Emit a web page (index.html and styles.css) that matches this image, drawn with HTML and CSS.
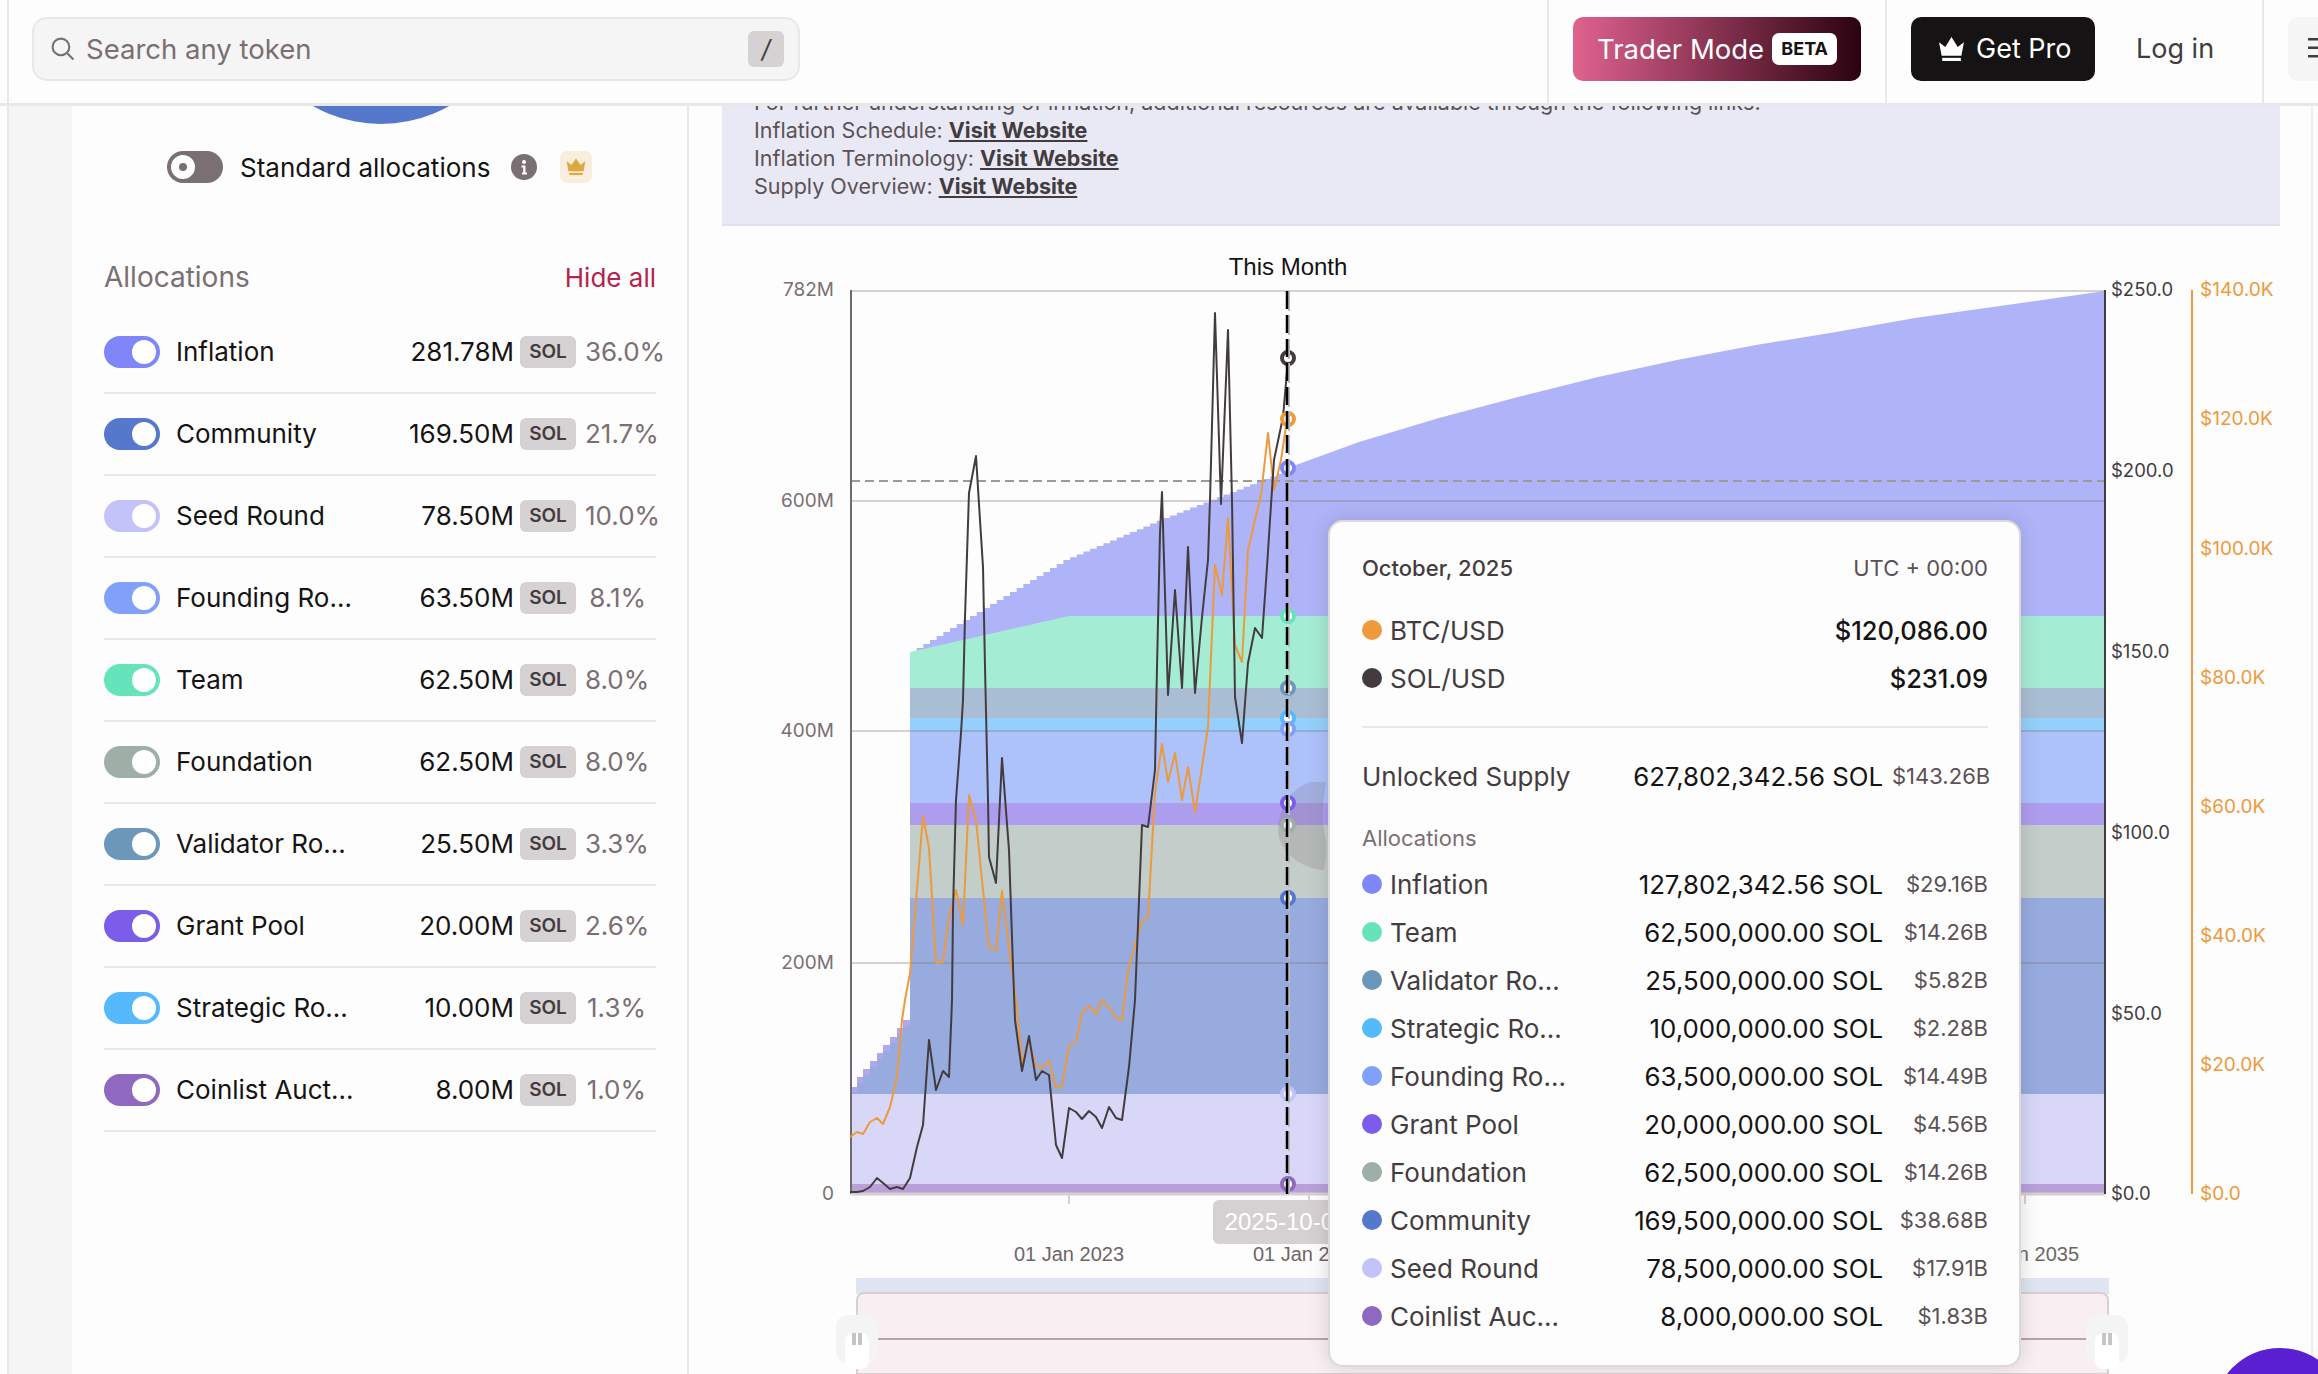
FILE: index.html
```html
<!DOCTYPE html>
<html>
<head>
<title>Solana token unlocks</title>
<link rel="stylesheet" href="styles.css">
</head>
<body>
<div class="app">

<header class="topbar">
	<div class="nav-part nav-search">
		<div class="search">
			<svg class="search-icon" viewBox="0 0 24 24"><circle cx="10.5" cy="10.5" r="8"/><line x1="16.5" y1="16.5" x2="22.5" y2="22.5"/></svg>
			<span class="search-text">Search any token</span>
			<span class="key">/</span>
		</div>
	</div>
	<div class="nav-part nav-trader">
		<a class="btn trader">Trader Mode <span class="beta">BETA</span></a>
	</div>
	<div class="nav-part nav-user">
		<a class="btn pro">
			<svg class="crown" viewBox="0 0 26 26"><path d="M1 7l6 4.500L13 2l6 9.500L25 7l-2.500 13h-19z"/><rect x="4" y="22" width="18" height="3"/></svg>
			Get Pro
		</a>
		<a class="login">Log in</a>
	</div>
	<div class="nav-part nav-menu">
		<div class="menu-btn">
			<svg viewBox="0 0 24 20"><rect y="0" width="24" height="2.500"/><rect y="8.500" width="24" height="2.500"/><rect y="17" width="24" height="2.500"/></svg>
		</div>
	</div>
</header>

<div class="content">
	<div class="gutter"></div>

	<aside class="sidebar">
		<div class="pie-clip"><div class="pie"></div></div>

		<div class="standard">
			<span class="switch-off"></span>
			<span class="standard-label">Standard allocations</span>
			<svg class="info-icon" viewBox="0 0 26 26"><circle cx="13" cy="13" r="13"/><circle cx="13" cy="8" r="2" fill="#fff"/><path d="M10.500 11.500h4v7h1.500v2h-5v-2h1.200v-5h-1.700z" fill="#fff"/></svg>
			<span class="crown-badge">
				<svg viewBox="0 0 26 26"><path d="M2 6l5.500 4.500L13 3l5.500 7.500L24 6l-2 12H4z"/><rect x="5" y="20" width="16" height="2.500"/></svg>
			</span>
		</div>

		<div class="alloc-head">
			<span class="alloc-title">Allocations</span>
			<a class="hide-all">Hide all</a>
		</div>

		<ul class="alloc-list">
			<li class="alloc-row c-inflation"><span class="toggle"></span><span class="alloc-name">Inflation</span><span class="alloc-amt">281.78M</span><span class="unit">SOL</span><span class="alloc-pct">36.0%</span></li>
			<li class="alloc-row c-community"><span class="toggle"></span><span class="alloc-name">Community</span><span class="alloc-amt">169.50M</span><span class="unit">SOL</span><span class="alloc-pct">21.7%</span></li>
			<li class="alloc-row c-seed"><span class="toggle"></span><span class="alloc-name">Seed Round</span><span class="alloc-amt">78.50M</span><span class="unit">SOL</span><span class="alloc-pct">10.0%</span></li>
			<li class="alloc-row c-founding"><span class="toggle"></span><span class="alloc-name">Founding Ro...</span><span class="alloc-amt">63.50M</span><span class="unit">SOL</span><span class="alloc-pct">8.1%</span></li>
			<li class="alloc-row c-team"><span class="toggle"></span><span class="alloc-name">Team</span><span class="alloc-amt">62.50M</span><span class="unit">SOL</span><span class="alloc-pct">8.0%</span></li>
			<li class="alloc-row c-foundation"><span class="toggle"></span><span class="alloc-name">Foundation</span><span class="alloc-amt">62.50M</span><span class="unit">SOL</span><span class="alloc-pct">8.0%</span></li>
			<li class="alloc-row c-validator"><span class="toggle"></span><span class="alloc-name">Validator Ro...</span><span class="alloc-amt">25.50M</span><span class="unit">SOL</span><span class="alloc-pct">3.3%</span></li>
			<li class="alloc-row c-grant"><span class="toggle"></span><span class="alloc-name">Grant Pool</span><span class="alloc-amt">20.00M</span><span class="unit">SOL</span><span class="alloc-pct">2.6%</span></li>
			<li class="alloc-row c-strategic"><span class="toggle"></span><span class="alloc-name">Strategic Ro...</span><span class="alloc-amt">10.00M</span><span class="unit">SOL</span><span class="alloc-pct">1.3%</span></li>
			<li class="alloc-row c-coinlist"><span class="toggle"></span><span class="alloc-name">Coinlist Auct...</span><span class="alloc-amt">8.00M</span><span class="unit">SOL</span><span class="alloc-pct">1.0%</span></li>
		</ul>
	</aside>

	<main class="main">
		<section class="notes">
			<p>For further understanding of inflation, additional resources are available through the following links.</p>
			<p>Inflation Schedule: <a>Visit Website</a></p>
			<p>Inflation Terminology: <a>Visit Website</a></p>
			<p>Supply Overview: <a>Visit Website</a></p>
		</section>

		<div class="chart">
			<svg class="chart-svg" viewBox="722 230 1596 1144">
				<text class="month-label" x="1288" y="275">This Month</text>

				<!-- minimap -->
				<rect x="856" y="1278" width="1253" height="16" fill="#dfe5f2"/>
				<path d="M857 1374V1300a7 7 0 0 1 7-7H2101a7 7 0 0 1 7 7V1374z" fill="#f9eff2" stroke="#d5d0d2" stroke-width="2"/>
				<line x1="857" y1="1339" x2="2107" y2="1339" stroke="#b8a3aa" stroke-width="2"/>

				<!-- stacked areas -->
				<path fill="#aeb4f7" d="M910 652h6.670v-4h6.670v-4h6.670v-4h6.670v-4h6.670v-4h6.670v-4h6.670v-4h6.670v-4h6.670v-4h6.670v-4h6.670v-4h6.670v-4h6.670v-4h6.670v-4h6.670v-4h6.670v-4h6.670v-4h6.670v-4h6.670v-4h6.670v-4h6.670v-4h6.670v-4h6.670v-4h6.670v-2.800h6.670v-2.800h6.670v-2.800h6.670v-2.800h6.670v-2.800h6.670v-2.800h6.670v-2.800h6.670v-2.800h6.670v-2.800h6.670v-2.800h6.670v-2.800h6.670v-2.800h6.670v-2.800h6.670v-2.800h6.670v-2.800h6.670v-2.600h6.670v-2.600h6.670v-2.600h6.670v-2.600h6.670v-2.600h6.670v-2.600h6.670v-2.600h6.670v-2.600h6.670v-2.600h6.670v-2.600h6.670v-2.600h6.670v-2.600h6.670v-2.600h6.670v-2.600h6.670v-2.600h6.670v-2.600h6.670v-2.600h6.670v-2.600h6.670v-2.600L1296 465L1359 442L1439 418L1518 397L1598 377L1677 360L1756 345L1836 332L1915 318L2021 303L2105 291V700H910z"/>
				<path fill="#a5ecd4" d="M910 652L1069 616H2105V690H910z"/>
				<rect fill="#a9bed4" x="910" y="688" width="1195" height="31"/>
				<rect fill="#94d0fb" x="910" y="718" width="1195" height="14"/>
				<rect fill="#adc1fb" x="910" y="731" width="1195" height="73"/>
				<rect fill="#ad9dee" x="910" y="803" width="1195" height="23"/>
				<rect fill="#c3cdc9" x="910" y="825" width="1195" height="74"/>
				<rect fill="#97abdf" x="910" y="898" width="1195" height="197"/>
				<path fill="#b3a5ef" d="M851 1094V1087H857V1077H863V1069H870V1061H877V1053H883V1045H890V1037H897V1028H903V1020H910V1094z"/>
				<path fill="#97abdf" d="M851 1094V1092H857V1083H863V1075H870V1067H877V1059H883V1051H890V1043H897V1034H903V1026H910V1094z"/>
				<rect fill="#d8d7f8" x="851" y="1094" width="1254" height="91"/>
				<rect fill="#b9a0d8" x="851" y="1184" width="1254" height="10"/>

				<!-- grid -->
				<g class="grid">
					<line x1="851" y1="291" x2="2105" y2="291"/>
					<line x1="851" y1="501" x2="2105" y2="501"/>
					<line x1="851" y1="731" x2="2105" y2="731"/>
					<line x1="851" y1="963" x2="2105" y2="963"/>
				</g>
				<line x1="851" y1="481" x2="2105" y2="481" stroke="#9b9b9b" stroke-width="2" stroke-dasharray="9 5"/>
				<path d="M1310 782c-22 8-32 30-32 48 0 20 24 40 46 40 4-20 2-30-1-45-1-15 1-30 3-43z" fill="#7a6f73" fill-opacity=".22"/>

				<!-- axes -->
				<line x1="851" y1="290" x2="851" y2="1194" stroke="#6e6a72" stroke-width="2"/>
				<line x1="851" y1="1194" x2="2105" y2="1194" stroke="#d5d0d2" stroke-width="3"/>
				<line x1="2105" y1="290" x2="2105" y2="1194" stroke="#433c3f" stroke-width="2"/>
				<line x1="2192" y1="290" x2="2192" y2="1194" stroke="#ec9a3c" stroke-width="2"/>
				<line x1="1069" y1="1195" x2="1069" y2="1204" stroke="#d5d0d2" stroke-width="2"/>
				<line x1="1309" y1="1195" x2="1309" y2="1204" stroke="#d5d0d2" stroke-width="2"/>
				<line x1="2025" y1="1195" x2="2025" y2="1204" stroke="#d5d0d2" stroke-width="2"/>

				<g class="axis-left">
					<text x="834" y="296">782M</text>
					<text x="834" y="507">600M</text>
					<text x="834" y="737">400M</text>
					<text x="834" y="969">200M</text>
					<text x="834" y="1200">0</text>
				</g>
				<g class="axis-right">
					<text x="2111" y="296">$250.0</text>
					<text x="2111" y="477">$200.0</text>
					<text x="2111" y="658">$150.0</text>
					<text x="2111" y="839">$100.0</text>
					<text x="2111" y="1020">$50.0</text>
					<text x="2111" y="1200">$0.0</text>
				</g>
				<g class="axis-btc">
					<text x="2200" y="296">$140.0K</text>
					<text x="2200" y="425">$120.0K</text>
					<text x="2200" y="555">$100.0K</text>
					<text x="2200" y="684">$80.0K</text>
					<text x="2200" y="813">$60.0K</text>
					<text x="2200" y="942">$40.0K</text>
					<text x="2200" y="1071">$20.0K</text>
					<text x="2200" y="1200">$0.0</text>
				</g>
				<g class="axis-date">
					<text x="1069" y="1261">01 Jan 2023</text>
					<text x="1308" y="1261">01 Jan 2026</text>
					<text x="2024" y="1261">01 Jan 2035</text>
				</g>

				<!-- price lines -->
				<polyline class="line-btc" points="850,1137 857,1132 863,1134 870,1122 877,1118 883,1124 890,1107 897,1077 902,1020 905,1000 910,973 917,890 923,816 929,848 936,963 943,962 949,917 956,890 963,925 969,795 976,820 983,890 989,948 996,950 1002,891 1009,947 1016,1000 1022,1063 1029,1042 1036,1066 1042,1068 1049,1061 1056,1088 1062,1086 1069,1046 1076,1042 1082,1012 1089,1006 1096,1014 1102,1000 1109,1007 1116,1018 1122,1020 1128,970 1135,945 1142,921 1148,917 1155,793 1162,744 1168,782 1175,753 1182,800 1188,767 1195,812 1202,767 1208,727 1212,633 1215,565 1222,595 1228,518 1235,645 1242,662 1248,550 1255,520 1261,495 1268,433 1274,490 1281,460 1287,420"/>
				<polyline class="line-sol" points="850,1192 857,1192 863,1191 870,1187 877,1178 883,1183 890,1189 897,1187 903,1189 910,1178 917,1147 923,1125 929,1040 936,1090 943,1071 949,1077 952,1000 953,910 956,800 961,733 963,700 965,617 969,493 976,456 980,520 983,567 985,667 988,800 989,857 996,883 1002,758 1009,850 1013,967 1015,1020 1022,1071 1029,1036 1036,1080 1042,1071 1049,1075 1056,1145 1062,1158 1069,1108 1076,1112 1082,1119 1089,1111 1096,1117 1102,1128 1109,1107 1116,1118 1122,1120 1129,1067 1135,1000 1142,825 1148,827 1155,770 1157,667 1160,533 1162,492 1168,695 1175,590 1182,688 1188,547 1195,693 1202,617 1208,560 1210,500 1215,313 1221,504 1228,330 1232,500 1235,697 1242,743 1248,663 1255,628 1262,638 1267,567 1270,520 1274,460 1283,417 1288,360"/>

				<!-- markers on the hovered month -->
				<g class="markers">
					<circle cx="1288" cy="358" r="6" stroke="#433c3f"/>
					<circle cx="1288" cy="419" r="6" stroke="#ec9a3c"/>
					<circle cx="1288" cy="468" r="6" stroke="#7f86f7"/>
					<circle cx="1288" cy="616" r="6" stroke="#65e3bb"/>
					<circle cx="1288" cy="688" r="6" stroke="#6d97b9"/>
					<circle cx="1288" cy="718" r="6" stroke="#55b9fd"/>
					<circle cx="1288" cy="729" r="6" stroke="#80a0fa"/>
					<circle cx="1288" cy="803" r="6" stroke="#7b5dea"/>
					<circle cx="1288" cy="825" r="6" stroke="#9dafa7"/>
					<circle cx="1288" cy="898" r="6" stroke="#5577cc"/>
					<circle cx="1288" cy="1094" r="6" stroke="#c3c3fa"/>
					<circle cx="1288" cy="1184" r="6" stroke="#8f69c0"/>
				</g>
				<line x1="1289" y1="291" x2="1289" y2="1194" stroke="#b9b9c0" stroke-width="2" stroke-dasharray="20 4"/>
				<line x1="1287" y1="291" x2="1287" y2="1194" stroke="#000" stroke-width="2.500" stroke-dasharray="18 6"/>

				<rect x="1213" y="1200" width="148" height="44" rx="6" fill="#d5d0d2"/>
				<text class="date-pill" x="1286" y="1230">2025-10-01</text>
			</svg>

			<div class="handle handle-left"><span></span></div>
			<div class="handle handle-right"><span></span></div>

			<div class="tooltip">
				<div class="tip-head"><span class="tip-date">October, 2025</span><span class="tip-zone">UTC + 00:00</span></div>

				<div class="tip-prices">
					<div class="tip-row"><i class="dot c-btc"></i><span class="tip-name">BTC/USD</span><span class="tip-price">$120,086.00</span></div>
					<div class="tip-row"><i class="dot c-sol"></i><span class="tip-name">SOL/USD</span><span class="tip-price">$231.09</span></div>
				</div>

				<div class="tip-rule"></div>

				<div class="tip-row tip-supply"><span class="tip-name">Unlocked Supply</span><span class="tip-amt">627,802,342.56 SOL</span><span class="tip-usd">$143.26B</span></div>

				<div class="tip-title">Allocations</div>

				<div class="tip-row"><i class="dot c-inflation"></i><span class="tip-name">Inflation</span><span class="tip-amt">127,802,342.56 SOL</span><span class="tip-usd">$29.16B</span></div>
				<div class="tip-row"><i class="dot c-team"></i><span class="tip-name">Team</span><span class="tip-amt">62,500,000.00 SOL</span><span class="tip-usd">$14.26B</span></div>
				<div class="tip-row"><i class="dot c-validator"></i><span class="tip-name">Validator Ro...</span><span class="tip-amt">25,500,000.00 SOL</span><span class="tip-usd">$5.82B</span></div>
				<div class="tip-row"><i class="dot c-strategic"></i><span class="tip-name">Strategic Ro...</span><span class="tip-amt">10,000,000.00 SOL</span><span class="tip-usd">$2.28B</span></div>
				<div class="tip-row"><i class="dot c-founding"></i><span class="tip-name">Founding Ro...</span><span class="tip-amt">63,500,000.00 SOL</span><span class="tip-usd">$14.49B</span></div>
				<div class="tip-row"><i class="dot c-grant"></i><span class="tip-name">Grant Pool</span><span class="tip-amt">20,000,000.00 SOL</span><span class="tip-usd">$4.56B</span></div>
				<div class="tip-row"><i class="dot c-foundation"></i><span class="tip-name">Foundation</span><span class="tip-amt">62,500,000.00 SOL</span><span class="tip-usd">$14.26B</span></div>
				<div class="tip-row"><i class="dot c-community"></i><span class="tip-name">Community</span><span class="tip-amt">169,500,000.00 SOL</span><span class="tip-usd">$38.68B</span></div>
				<div class="tip-row"><i class="dot c-seed"></i><span class="tip-name">Seed Round</span><span class="tip-amt">78,500,000.00 SOL</span><span class="tip-usd">$17.91B</span></div>
				<div class="tip-row"><i class="dot c-coinlist"></i><span class="tip-name">Coinlist Auc...</span><span class="tip-amt">8,000,000.00 SOL</span><span class="tip-usd">$1.83B</span></div>
			</div>
		</div>
	</main>
</div>

<div class="chat-bubble"></div>
</div>
</body>
</html>
```

FILE: styles.css
```css
* {
	box-sizing: border-box;
}
html, body {
	margin: 0;
	padding: 0;
}
body {
	background-color: #fdfdfd;
	color: #161314;
	font-family: "Inter", "Noto Sans", sans-serif;
	font-size: 26px;
}
a {
	color: inherit;
}

.c-inflation {--c: #7f86f7;}
.c-community {--c: #5577cc;}
.c-seed {--c: #c3c3fa;}
.c-founding {--c: #80a0fa;}
.c-team {--c: #65e3bb;}
.c-foundation {--c: #9dafa7;}
.c-validator {--c: #6d97b9;}
.c-grant {--c: #7b5dea;}
.c-strategic {--c: #55b9fd;}
.c-coinlist {--c: #8f69c0;}
.c-btc {--c: #ec9a3c;}
.c-sol {--c: #433c3f;}

.app {
	position: relative;
	width: 2318px;
	height: 1374px;
	overflow: hidden;
	display: flex;
	flex-direction: column;
}

/* top bar */
.topbar {
	display: flex;
	flex: none;
	height: 106px;
	border-bottom: 3px solid #e8e8e8;
}
.nav-part {
	display: flex;
	flex: none;
	align-items: center;
	height: 103px;
	padding-left: 24px;
	border-right: 2px solid #e8e8e8;
	padding-bottom: 6px;
}
.nav-search {
	width: 1542px;
	margin-left: 7px;
	padding-left: 23px;
	border-left: 2px solid #e8e8e8;
}
.nav-trader {
	width: 338px;
}
.nav-user {
	width: 377px;
}
.nav-menu {
	border-right: 0;
	width: 54px;
}

.search {
	display: flex;
	align-items: center;
	width: 768px;
	height: 64px;
	padding: 0 14px 0 16px;
	background-color: #f5f5f5;
	border: 2px solid #e8e8e8;
	border-radius: 15px;
}
.search-icon {
	width: 25px;
	height: 25px;
	fill: none;
	stroke: #7a6f73;
	stroke-width: 2;
}
.search-text {
	flex: 1;
	margin-left: 11px;
	color: #7a6f73;
	font-size: 27.500px;
}
.key {
	width: 36px;
	height: 36px;
	background-color: #d6d1d3;
	border-radius: 6px;
	color: #433c3f;
	font-style: italic;
	font-size: 25px;
	line-height: 36px;
	text-align: center;
}

.btn {
	display: flex;
	align-items: center;
	height: 64px;
	border-radius: 10px;
	color: #fff;
	font-size: 27px;
}
.trader {
	width: 288px;
	padding-left: 24px;
	background: linear-gradient(90deg, #e0628f, #2c0210);
	font-size: 27.500px;
}
.beta {
	margin-left: 8px;
	width: 65px;
	height: 32px;
	background-color: #fff;
	border-radius: 7px;
	color: #161314;
	font-size: 18px;
	font-weight: 700;
	line-height: 32px;
	text-align: center;
}
.pro {
	width: 184px;
	padding-left: 27px;
	background-color: #161314;
	gap: 11px;
}
.crown {
	width: 27px;
	height: 27px;
	fill: #fff;
}
.login {
	margin-left: 41px;
	color: #433c3f;
	font-size: 27px;
}
.menu-btn {
	flex: none;
	width: 60px;
	height: 64px;
	padding: 21px 0 0 20px;
	background-color: #f5f5f5;
	border-radius: 10px;
}
.menu-btn svg {
	display: block;
	width: 24px;
	height: 20px;
	fill: #433c3f;
}

/* page columns */
.content {
	display: flex;
	flex: 1;
	min-height: 0;
	margin-left: 7px;
	margin-right: 5px;
	overflow: hidden;
	border-left: 2px solid #e8e8e8;
	border-right: 2px solid #eeeeee;
}
.gutter {
	flex: none;
	width: 63px;
	background-color: #f5f5f5;
}
.sidebar {
	flex: none;
	width: 617px;
	padding: 0 31px 0 32px;
	border-right: 2px solid #e8e8e8;
}
.pie-clip {
	height: 18px;
	overflow: hidden;
}
.pie {
	width: 276px;
	height: 276px;
	margin: -258px 0 0 139px;
	background-color: #5577cc;
	border-radius: 50%;
}

.standard {
	display: flex;
	align-items: center;
	height: 32px;
	margin: 27px 0 0 63px;
}
.switch-off {
	position: relative;
	flex: none;
	width: 56px;
	height: 32px;
	background-color: #7a6f73;
	border-radius: 16px;
}
.switch-off::after {
	content: "";
	position: absolute;
	left: 4px;
	top: 4px;
	width: 8px;
	height: 8px;
	border: 8px solid #fff;
	background-color: #7a6f73;
	border-radius: 50%;
}
.standard-label {
	margin-left: 17px;
}
.info-icon {
	flex: none;
	width: 26px;
	height: 26px;
	margin-left: 21px;
	fill: #7a6f73;
}
.crown-badge {
	flex: none;
	display: flex;
	align-items: center;
	justify-content: center;
	width: 32px;
	height: 32px;
	margin-left: 23px;
	background-color: #f9eedd;
	border-radius: 7px;
}
.crown-badge svg {
	width: 22px;
	height: 22px;
	fill: #e0a840;
}

.alloc-head {
	display: flex;
	justify-content: space-between;
	align-items: center;
	height: 32px;
	margin-top: 78px;
}
.alloc-title {
	color: #7a6f73;
	font-size: 28px;
}
.hide-all {
	color: #b5234e;
}

.alloc-list {
	list-style: none;
	margin: 19px 0 0 0;
	padding: 0;
}
.alloc-row {
	display: flex;
	align-items: center;
	height: 82px;
	padding-right: 10px;
	border-bottom: 2px solid #e8e8e8;
	white-space: nowrap;
}
.toggle {
	position: relative;
	flex: none;
	width: 56px;
	height: 32px;
	background-color: var(--c);
	border-radius: 16px;
}
.toggle::after {
	content: "";
	position: absolute;
	right: 4px;
	top: 4px;
	width: 24px;
	height: 24px;
	background-color: #fff;
	border-radius: 50%;
}
.alloc-name {
	flex: 1;
	margin-left: 16px;
	line-height: 30px;
	padding-bottom: 1px;
}
.alloc-amt {
	color: #161314;
	line-height: 30px;
	padding-bottom: 1px;
}
.unit {
	flex: none;
	width: 56px;
	height: 32px;
	margin-left: 6px;
	background-color: #d6d1d3;
	border-radius: 6px;
	color: #433c3f;
	font-size: 19px;
	font-weight: 600;
	line-height: 32px;
	text-align: center;
}
.alloc-pct {
	flex: none;
	width: 61px;
	margin-left: 9px;
	color: #7a6f73;
	line-height: 30px;
	padding-bottom: 1px;
	text-align: right;
}

/* main column */
.main {
	flex: 1;
	min-width: 0;
	padding-left: 33px;
}
.notes {
	width: 1558px;
	margin-top: -18px;
	padding: 0 32px 24px;
	background-color: #e9e9f6;
	border-bottom: 2px solid #dfe0f0;
	color: #5a5255;
	font-size: 21.500px;
	line-height: 28px;
}
.notes p {
	margin: 0;
}
.notes a {
	color: #433c3f;
	font-weight: 700;
	text-decoration: underline;
}

.chart {
	position: relative;
}
.chart-svg {
	display: block;
	width: 1596px;
	height: 1144px;
	margin-top: 4px;
}
.chart-svg text {
	font-family: "Inter", "Noto Sans", sans-serif;
}
.chart-svg .month-label {
	font-family: "Liberation Sans", sans-serif;
	font-size: 24px;
	text-anchor: middle;
	fill: #161314;
}
.grid line {
	stroke: #7a6f73;
	stroke-opacity: .3;
	stroke-width: 2;
}
.axis-left text {
	font-size: 19px;
	fill: #7a6f73;
	text-anchor: end;
}
.axis-right text {
	font-size: 18.500px;
	fill: #433c3f;
}
.axis-btc text {
	font-size: 19px;
	fill: #ec9a3c;
}
.chart-svg .axis-date text {
	font-family: "Liberation Sans", sans-serif;
	font-size: 20px;
	fill: #6e6568;
	text-anchor: middle;
}
.chart-svg .date-pill {
	font-family: "Liberation Sans", sans-serif;
	font-size: 24px;
	fill: #fff;
	text-anchor: middle;
}
.line-btc, .line-sol {
	fill: none;
	stroke-width: 2;
	stroke-linejoin: round;
}
.line-btc {
	stroke: #ec9a3c;
}
.line-sol {
	stroke: #433c3f;
}
.markers circle {
	fill: #fff;
	stroke-width: 4;
}

.handle {
	position: absolute;
	top: 1085px;
	width: 42px;
	height: 48px;
	padding: 6px 9px;
	background-color: #f4f4f4;
	border-radius: 12px;
}
.handle span {
	display: block;
	width: 24px;
	height: 36px;
	background-color: #fff;
	border-radius: 8px;
}
.handle span::before {
	content: "";
	display: block;
	width: 4px;
	height: 12px;
	margin: 12px 0 0 7px;
	background-color: #c8c4c6;
	box-shadow: 6px 0 0 #c8c4c6;
}
.handle-left {
	left: 114px;
}
.handle-right {
	left: 1364px;
}

.tooltip {
	position: absolute;
	left: 606px;
	top: 290px;
	width: 693px;
	height: 847px;
	padding: 30px 31px 0 32px;
	background-color: #fdfdfd;
	border: 2px solid #ddd9db;
	border-radius: 15px;
	box-shadow: 0 0 20px rgba(60, 50, 60, .18);
	white-space: nowrap;
}
.tip-head {
	display: flex;
	justify-content: space-between;
	align-items: center;
	height: 32px;
	font-size: 22px;
}
.tip-date {
	color: #433c3f;
	font-weight: 500;
}
.tip-zone {
	color: #5a5255;
}
.tip-prices {
	margin-top: 22px;
}
.tip-row {
	display: flex;
	align-items: center;
	height: 48px;
}
.dot {
	flex: none;
	width: 20px;
	height: 20px;
	margin-right: 8px;
	background-color: var(--c);
	border-radius: 50%;
}
.tip-name {
	flex: 1;
	color: #433c3f;
}
.tip-price {
	color: #161314;
	font-size: 25.500px;
	font-weight: 500;
}
.tip-rule {
	height: 2px;
	margin-top: 24px;
	background-color: #e8e8e8;
}
.tip-supply {
	margin-top: 24px;
}
.tip-amt {
	color: #161314;
	font-size: 25.800px;
}
.tip-usd {
	flex: none;
	width: 96px;
	margin-left: 9px;
	color: #5a5255;
	font-size: 22px;
	text-align: right;
}
.tip-title {
	height: 30px;
	margin: 23px 0 7px;
	color: #7a6f73;
	font-size: 22px;
	line-height: 30px;
}

.chat-bubble {
	position: absolute;
	left: 2213px;
	top: 1348px;
	width: 134px;
	height: 134px;
	background-color: #5a1fd1;
	border-radius: 50%;
}
```
